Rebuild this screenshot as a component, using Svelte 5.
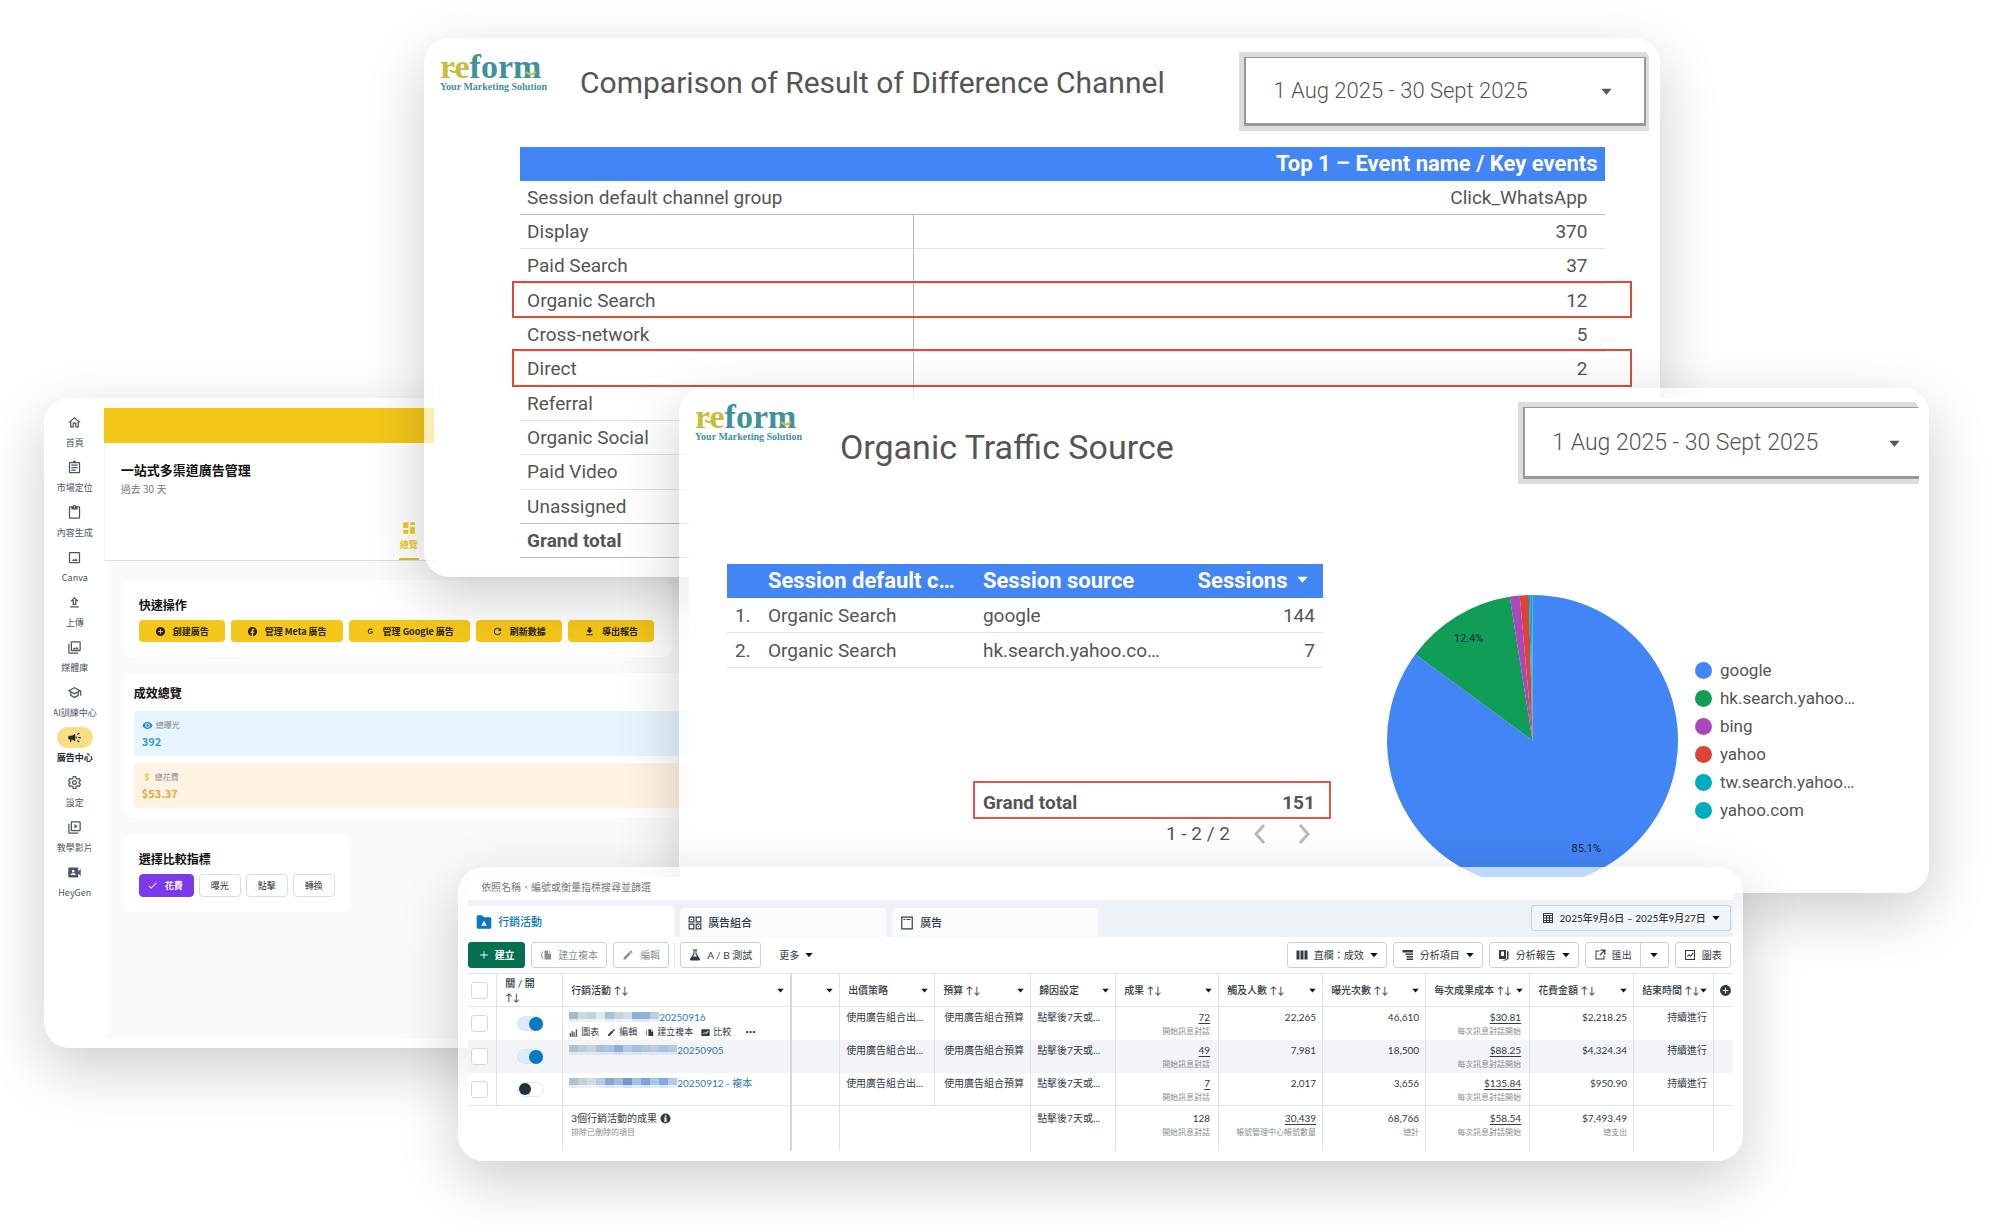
<script lang="ts">
  const icons: Record<string, string> = {
    home: 'M12 5.69l5 4.5V18h-2v-6H9v6H7v-7.81l5-4.5M12 3L2 12h3v8h6v-6h2v6h6v-8h3L12 3z',
    assignment: 'M7 15h7v2H7zm0-4h10v2H7zm0-4h10v2H7zm12-4h-4.18C14.4 1.84 13.3 1 12 1c-1.3 0-2.4.84-2.82 2H5c-1.1 0-2 .9-2 2v14c0 1.1.9 2 2 2h14c1.1 0 2-.9 2-2V5c0-1.1-.9-2-2-2zm0 16H5V5h14v14z',
    paste: 'M19 2h-4.18C14.4.84 13.3 0 12 0c-1.3 0-2.4.84-2.82 2H5c-1.1 0-2 .9-2 2v16c0 1.1.9 2 2 2h14c1.1 0 2-.9 2-2V4c0-1.1-.9-2-2-2zm-7 0c.55 0 1 .45 1 1s-.45 1-1 1-1-.45-1-1 .45-1 1-1zm7 18H5V4h2v3h10V4h2v16z',
    image: 'M19 5v14H5V5h14m0-2H5c-1.1 0-2 .9-2 2v14c0 1.1.9 2 2 2h14c1.1 0 2-.9 2-2V5c0-1.1-.9-2-2-2zM14.5 13l-2.2 2.8L10.6 14 8 17.5h9z',
    upload: 'M9 16h6v-6h4l-7-7-7 7h4v6zm3-10.17L14.17 8H13v6h-2V8H9.83L12 5.83zM5 18h14v2H5z',
    library: 'M20 4v12H8V4h12m0-2H8c-1.1 0-2 .9-2 2v12c0 1.1.9 2 2 2h12c1.1 0 2-.9 2-2V4c0-1.1-.9-2-2-2zm-8.5 9.67l1.69 2.26 2.48-3.1L19 15H9zM2 6v14c0 1.1.9 2 2 2h14v-2H4V6H2z',
    school: 'M12 3L1 9l4 2.18v6L12 21l7-3.82v-6l2-1.09V17h2V9L12 3zm6.82 6L12 12.72 5.18 9 12 5.28 18.82 9zM17 15.99l-5 2.73-5-2.73v-3.72L12 15l5-2.73v3.72z',
    campaign: 'M18 11v2h4v-2h-4zm-2 6.61c.96.71 2.21 1.65 3.2 2.39.4-.53.8-1.07 1.2-1.6-.99-.74-2.24-1.68-3.2-2.4-.4.54-.8 1.08-1.2 1.61zM20.4 5.6c-.4-.53-.8-1.07-1.2-1.6-.99.74-2.24 1.68-3.2 2.4.4.53.8 1.07 1.2 1.6.96-.72 2.21-1.65 3.2-2.4zM4 9c-1.1 0-2 .9-2 2v2c0 1.1.9 2 2 2h1v4h2v-4h1l5 3V6L8 9H4zm11.5 3c0-1.33-.58-2.53-1.5-3.35v6.69c.92-.81 1.5-2.01 1.5-3.34z',
    videos: 'M4 6H2v14c0 1.1.9 2 2 2h14v-2H4V6zm16-4H8c-1.1 0-2 .9-2 2v12c0 1.1.9 2 2 2h12c1.1 0 2-.9 2-2V4c0-1.1-.9-2-2-2zm0 14H8V4h12v12zM12 6.5v7l5-3.5z',
    heygen: 'M18 10.48V6c0-1.1-.9-2-2-2H4c-1.1 0-2 .9-2 2v12c0 1.1.9 2 2 2h12c1.1 0 2-.9 2-2v-4.48l4 3.98v-11l-4 3.98zM10 8c1.1 0 2 .9 2 2s-.9 2-2 2-2-.9-2-2 .9-2 2-2zm4 8H6v-.57c0-.81.48-1.53 1.22-1.85.85-.37 1.79-.58 2.78-.58s1.93.21 2.78.58c.74.32 1.22 1.04 1.22 1.85V16z',
    dashboard: 'M2 12h9V2H2v10zm0 10h9v-7H2v7zm12 0h8V10h-8v12zm0-20v5h8V2h-8z',
    add: 'M12 2C6.48 2 2 6.48 2 12s4.48 10 10 10 10-4.48 10-10S17.52 2 12 2zm5 11h-4v4h-2v-4H7v-2h4V7h2v4h4v2z',
    facebook: 'M22 12c0-5.52-4.48-10-10-10S2 6.48 2 12c0 4.84 3.44 8.87 8 9.8V15H8v-3h2V9.5C10 7.57 11.57 6 13.5 6H16v3h-2c-.55 0-1 .45-1 1v2h3v3h-3v6.95c5.05-.5 9-4.76 9-9.95z',
    google: 'M17 8A6 6 0 1 0 18 12h-6v2h3.5a4 4 0 1 1-.2-4.5z',
    refresh: 'M17.65 6.35C16.2 4.9 14.21 4 12 4c-4.42 0-7.99 3.58-7.99 8s3.57 8 7.99 8c3.73 0 6.84-2.55 7.73-6h-2.08c-.82 2.33-3.04 4-5.65 4-3.31 0-6-2.69-6-6s2.69-6 6-6c1.66 0 3.14.69 4.22 1.78L13 11h7V4l-2.35 2.35z',
    download: 'M19 9h-4V3H9v6H5l7 7 7-7zM5 18v2h14v-2H5z',
    eye: 'M12 4.5C7 4.5 2.73 7.61 1 12c1.73 4.39 6 7.5 11 7.5s9.27-3.11 11-7.5c-1.73-4.39-6-7.5-11-7.5zM12 17c-2.76 0-5-2.24-5-5s2.24-5 5-5 5 2.24 5 5-2.24 5-5 5zm0-8c-1.66 0-3 1.34-3 3s1.34 3 3 3 3-1.34 3-3-1.34-3-3-3z',
    check: 'M9 16.2L4.8 12l-1.4 1.4L9 19 21 7l-1.4-1.4z',
    caret: 'M1 6h22L12 19z',
    folder: 'M3 2h6l3 3h9a2 2 0 0 1 2 2v13a2 2 0 0 1-2 2H3a2 2 0 0 1-2-2V4a2 2 0 0 1 2-2zM12 10l-4 8h2.5l1.5-1 1.500 1H16z',
    grid: 'M1 1h10v10H1zM3 3v6h6V3zM13 1h10v10H13zM15 3v6h6V3zM1 13h10v10H1zM3 15v6h6v-6zM13 13h10v10H13zM15 15v6h6v-6zM5 5h2v2H5zM17 17h2v2h-2z',
    window: 'M2 1h20v22H2zM4 3v18h16V3zM6 5h3v2H6zM11 5h7v2h-7z',
    plus: 'M11 3h2v8h8v2h-8v8h-2v-8H3v-2h8z',
    copy: 'M9 3h7v6h6v12H9zM18 3l4 4h-4zM6 4v2C3.500 9 3.500 15 6 19v2C1 17 1 8 6 4z',
    pencil: 'M3 17.25V21h3.75L17.81 9.94l-3.75-3.75L3 17.25zM20.71 7.04c.39-.39.39-1.02 0-1.41l-2.34-2.34c-.39-.39-1.02-.39-1.41 0l-1.83 1.83 3.75 3.75 1.83-1.83z',
    flask: 'M8 1h8v2h-1v6l7 11a2 2 0 0 1-2 3H4a2 2 0 0 1-2-3L9 9V3H8zM11 3v7l-3 5h8l-3-5V3z',
    calendar: 'M2 2h20v20H2zM4 8v3h4V8zM10 8v3h4V8zM16 8v3h4V8zM4 13v3h4v-3zM10 13v3h4v-3zM16 13v3h4v-3zM4 18v2h4v-2zM10 18v2h4v-2zM16 18v2h4v-2zM4 4v2h16V4z',
    columns: 'M1 3h6v18H1zM9 3h6v18H9zM17 3h6v18h-6z',
    breakdown: 'M1 2h21v5H1zM7 9h15v3H7zM9 14h13v3H9zM9 19h13v3H9z',
    report: 'M2 2h14v18H2zM6 5v9h6V5zM18 4l3 1v15l-6 3H8l10-3z',
    exportBox: 'M3 3h8v2H5v14h14v-6h2v8H3zM13 1h10v10h-2.500V5.200l-8 8-1.800-1.800 8-8H13z',
    chart: 'M2 2h20v20H2zM4 4v16h16V4zM6 14l4-4 3 3 5-6 1.500 1.500L13 16l-3-3-3 3z',
    bars: 'M2 13h3v8H2zM7 8h3v13H7zM12 11h3v10h-3zM18 3h3v18h-3zM1 22h22v1H1z',
    compare: 'M1 3h22v18H1zM5 15l5-4 3 2 5-6 2 2-6 7-4-3-3 3z',
    info: 'M12 1a11 11 0 1 0 0 22 11 11 0 0 0 0-22zM10.500 5h3.500v3h-3.500zM9 10h5v7h1v2H9v-2h1v-5H9z'
  };

  const navItems = [
    { icon: 'home', label: '首頁' },
    { icon: 'assignment', label: '市場定位' },
    { icon: 'paste', label: '內容生成' },
    { icon: 'image', label: 'Canva' },
    { icon: 'upload', label: '上傳' },
    { icon: 'library', label: '媒體庫' },
    { icon: 'school', label: 'AI訓練中心' },
    { icon: 'campaign', label: '廣告中心' },
    { icon: 'settings', label: '設定' },
    { icon: 'videos', label: '教學影片' },
    { icon: 'heygen', label: 'HeyGen' }
  ];

  const quickActions = [
    { icon: 'add', label: '創建廣告' },
    { icon: 'facebook', label: '管理 Meta 廣告' },
    { icon: 'google', label: '管理 Google 廣告' },
    { icon: 'refresh', label: '刷新數據' },
    { icon: 'download', label: '導出報告' }
  ];

  const metrics = ['花費', '曝光', '點擊', '轉換'];
  let metric = $state('花費');

  const channels = [
    { name: 'Display', value: 370 },
    { name: 'Paid Search', value: 37 },
    { name: 'Organic Search', value: 12, marked: true },
    { name: 'Cross-network', value: 5 },
    { name: 'Direct', value: 2, marked: true },
    { name: 'Referral', value: '' },
    { name: 'Organic Social', value: '' },
    { name: 'Paid Video', value: '' },
    { name: 'Unassigned', value: '' }
  ];

  const sources = [
    { label: 'google', share: 85.1, color: '#4285f4' },
    { label: 'hk.search.yahoo…', share: 12.4, color: '#0f9d58' },
    { label: 'bing', share: 1.1, color: '#ab47bc' },
    { label: 'yahoo', share: 1, color: '#db4437' },
    { label: 'tw.search.yahoo…', share: 0.2, color: '#00acc1' },
    { label: 'yahoo.com', share: 0.2, color: '#00acc1' }
  ];

  function slicePath(start: number, share: number) {
    const a = (start / 100) * 2 * Math.PI;
    const b = ((start + share) / 100) * 2 * Math.PI;
    const point = (t: number) => `${146 + 146 * Math.sin(t)} ${146 - 146 * Math.cos(t)}`;
    return `M146 146L${point(a)}A146 146 0 ${share > 50 ? 1 : 0} 1 ${point(b)}Z`;
  }

  const slices = sources.map((s, i) => {
    const start = sources.slice(0, i).reduce((sum, p) => sum + p.share, 0);
    return { color: s.color, d: slicePath(start, s.share) };
  });

  const adColumns = [
    { label: '出價策略', sort: false },
    { label: '預算', sort: true },
    { label: '歸因設定', sort: false },
    { label: '成果', sort: true },
    { label: '觸及人數', sort: true },
    { label: '曝光次數', sort: true },
    { label: '每次成果成本', sort: true },
    { label: '花費金額', sort: true },
    { label: '結束時間', sort: true }
  ];

  let campaigns = $state([
    { name: '20250916', mask: ['#a9bac8', '#cbd9e4', '#c2d3df', '#dfe9f0', '#a5c3dc', '#c3d3e0', '#cfdfea', '#8eb0d8', '#94b2d8', '#b9cde4'], on: true, results: '72', reach: '22,265', views: '46,610', cost: '$30.81', spend: '$2,218.25' },
    { name: '20250905', mask: ['#b1bfd2', '#bccbdc', '#c4d2e2', '#a9c0dd', '#a9c3e0', '#8caed8', '#b5cbe4', '#a3c0e0', '#b0c6df', '#b8cbe3', '#a9c1e4', '#b2cbea'], on: true, results: '49', reach: '7,981', views: '18,500', cost: '$88.25', spend: '$4,324.34' },
    { name: '20250912 - 複本', mask: ['#b3bfcb', '#c3d0dc', '#cfdce6', '#b4cadf', '#86a9d2', '#a0bcdc', '#7397cc', '#a8c3e2', '#7fa3d6', '#a9c6e2', '#86aadb', '#b4c9e2'], on: false, results: '7', reach: '2,017', views: '3,656', cost: '$135.84', spend: '$950.90' }
  ]);
</script>

{#snippet icon(name: string)}
  <svg class="icon" viewBox="0 0 24 24" aria-hidden="true">
    {#if name === 'settings'}
      <path fill="none" stroke="currentColor" stroke-width="2" stroke-linejoin="round" d="M10 2.500h4l.6 3 2 1.200 2.900-1 2 3.500-2.300 2v1.600l2.300 2-2 3.500-2.900-1-2 1.200-.6 3h-4l-.6-3-2-1.200-2.900 1-2-3.500 2.300-2v-1.600l-2.300-2 2-3.500 2.900 1 2-1.200z" />
      <circle cx="12" cy="12" r="3" fill="none" stroke="currentColor" stroke-width="2" />
    {:else}
      <path fill-rule="evenodd" d={icons[name]} />
    {/if}
  </svg>
{/snippet}

{#snippet logo()}
  <svg class="logo" viewBox="0 0 108 46" role="img" aria-label="reform">
    <text x="0" y="30" class="logo-name"><tspan class="logo-re">re</tspan><tspan>form</tspan></text>
    <path d="M10 22q4 4 8 0" fill="none" stroke="#c9bd3f" stroke-width="2" />
    <path d="M86 24q5 5 10 0" fill="none" stroke="#c9bd3f" stroke-width="2" />
    <text x="0" y="42" class="logo-tag">Your Marketing Solution</text>
  </svg>
{/snippet}

{#snippet dateRange(id: string)}
  <div class="date-frame">
    <select {id} aria-label="Date range">
      <option>1 Aug 2025 - 30 Sept 2025</option>
    </select>
    {@render icon('caret')}
  </div>
{/snippet}

<main class="stage">
  <section class="window dashboard">
    <div class="shot dash">
      <nav class="side">
        {#each navItems as item}
          <a href="#{item.icon}" class="side-item" class:active={item.icon === 'campaign'}>
            <span class="side-icon">{@render icon(item.icon)}</span>
            <span class="side-label">{item.label}</span>
          </a>
        {/each}
      </nav>
      <div class="dash-main">
        <div class="dash-bar"></div>
        <header class="dash-head">
          <h2>一站式多渠道廣告管理</h2>
          <p>過去 30 天</p>
          <a href="#overview" class="dash-tab">{@render icon('dashboard')}總覽</a>
        </header>
        <div class="dash-body">
          <div class="panel">
            <h3>快速操作</h3>
            <div class="actions">
              {#each quickActions as action}
                <button>{@render icon(action.icon)}{action.label}</button>
              {/each}
            </div>
          </div>
          <div class="panel results">
            <h3>成效總覽</h3>
            <div class="stat views">
              <span class="stat-label">{@render icon('eye')}總曝光</span>
              <strong>392</strong>
            </div>
            <div class="stat spend">
              <span class="stat-label"><b>$</b>總花費</span>
              <strong>$53.37</strong>
            </div>
          </div>
          <div class="panel compare">
            <h3>選擇比較指標</h3>
            <div class="chips">
              {#each metrics as m}
                <button class:on={metric === m} onclick={() => (metric = m)}>
                  {#if metric === m}{@render icon('check')}{/if}{m}
                </button>
              {/each}
            </div>
          </div>
        </div>
      </div>
    </div>
  </section>

  <section class="window comparison">
    <div class="shot">
      <header class="report-head">
        {@render logo()}
        <h2>Comparison of Result of Difference Channel</h2>
        {@render dateRange('comparison-range')}
      </header>
      <table class="channels">
        <colgroup><col class="channel-col" /><col /></colgroup>
        <thead>
          <tr class="bar"><th colspan="2">Top 1 – Event name / Key events</th></tr>
          <tr class="sub"><th>Session default channel group</th><th>Click_WhatsApp</th></tr>
        </thead>
        <tbody>
          {#each channels as channel}
            <tr class:marked={channel.marked}><td>{channel.name}</td><td>{channel.value}</td></tr>
          {/each}
        </tbody>
        <tfoot>
          <tr><td>Grand total</td><td></td></tr>
        </tfoot>
      </table>
    </div>
  </section>

  <section class="window organic">
    <div class="shot">
      <header class="report-head">
        {@render logo()}
        <h2>Organic Traffic Source</h2>
        {@render dateRange('organic-range')}
      </header>
      <div class="report-body">
        <div class="source-side">
          <table class="sources">
            <thead>
              <tr><th></th><th>Session default c…</th><th>Session source</th><th>Sessions {@render icon('caret')}</th></tr>
            </thead>
            <tbody>
              <tr><td>1.</td><td>Organic Search</td><td>google</td><td>144</td></tr>
              <tr><td>2.</td><td>Organic Search</td><td>hk.search.yahoo.co…</td><td>7</td></tr>
            </tbody>
          </table>
          <div class="total"><span>Grand total</span><span>151</span></div>
          <div class="pager">
            <span>1 - 2 / 2</span>
            <button aria-label="Previous page"><svg viewBox="0 0 12 20"><path d="M10 1L2 10l8 9" /></svg></button>
            <button aria-label="Next page"><svg viewBox="0 0 12 20"><path d="M2 1l8 9-8 9" /></svg></button>
          </div>
        </div>
        <svg class="pie" viewBox="0 0 292 292" role="img" aria-label="Sessions by source">
          {#each slices as slice}
            <path d={slice.d} fill={slice.color} />
          {/each}
          <text x="82" y="47">12.4%</text>
          <text x="200" y="258">85.1%</text>
        </svg>
        <ul class="legend">
          {#each sources as s}
            <li><svg viewBox="0 0 18 18"><circle cx="9" cy="9" r="9" fill={s.color} /></svg>{s.label}</li>
          {/each}
        </ul>
      </div>
    </div>
  </section>

  <section class="window ads">
    <div class="shot">
      <input class="search" aria-label="搜尋" placeholder="依照名稱、編號或衡量指標搜尋並篩選" />
      <div class="tabs">
        <button class="tab current">{@render icon('folder')}行銷活動</button>
        <button class="tab">{@render icon('grid')}廣告組合</button>
        <button class="tab">{@render icon('window')}廣告</button>
        <button class="tool range">{@render icon('calendar')}2025年9月6日 – 2025年9月27日<span class="drop">{@render icon('caret')}</span></button>
      </div>
      <div class="toolbar">
        <button class="tool create">{@render icon('plus')}建立</button>
        <button class="tool faded">{@render icon('copy')}建立複本</button>
        <button class="tool faded">{@render icon('pencil')}編輯</button>
        <span class="divider"></span>
        <button class="tool">{@render icon('flask')}A / B 測試</button>
        <button class="tool plain">更多<span class="drop">{@render icon('caret')}</span></button>
        <span class="spacer"></span>
        <button class="tool">{@render icon('columns')}直欄：成效<span class="drop">{@render icon('caret')}</span></button>
        <button class="tool">{@render icon('breakdown')}分析項目<span class="drop">{@render icon('caret')}</span></button>
        <button class="tool">{@render icon('report')}分析報告<span class="drop">{@render icon('caret')}</span></button>
        <div class="split">
          <button class="tool">{@render icon('exportBox')}匯出</button>
          <button class="tool" aria-label="匯出選項"><span class="drop">{@render icon('caret')}</span></button>
        </div>
        <button class="tool">{@render icon('chart')}圖表</button>
      </div>
      <table class="campaigns">
        <thead>
          <tr>
            <th><input type="checkbox" aria-label="全選" /></th>
            <th>關 / 開<br />↑↓</th>
            <th><div class="head">行銷活動 ↑↓{@render icon('caret')}</div></th>
            <th><div class="head">{@render icon('caret')}</div></th>
            {#each adColumns as col}
              <th><div class="head">{col.label}{col.sort ? ' ↑↓' : ''}{@render icon('caret')}</div></th>
            {/each}
            <th class="add-col">{@render icon('add')}</th>
          </tr>
        </thead>
        <tbody>
          {#each campaigns as c, i}
            <tr>
              <td><input type="checkbox" aria-label={c.name} /></td>
              <td><button class="switch" class:on={c.on} role="switch" aria-checked={c.on} aria-label={c.name} onclick={() => (c.on = !c.on)}></button></td>
              <td>
                <a class="name" href="#{c.name}">
                  <svg class="mask" viewBox="0 0 {c.mask.length * 9} 10" width={c.mask.length * 9} height="10">
                    {#each c.mask as color, n}
                      <rect x={n * 9} y="0" width="9" height="7" fill={color} />
                      <rect x={n * 9} y="7" width="9" height="3" fill={color} opacity="0.3" />
                    {/each}
                  </svg>{c.name}
                </a>
                {#if i === 0}
                  <div class="row-tools">
                    <button>{@render icon('bars')}圖表</button>
                    <button>{@render icon('pencil')}編輯</button>
                    <button>{@render icon('copy')}建立複本</button>
                    <button>{@render icon('compare')}比較</button>
                    <button class="dots">•••</button>
                  </div>
                {/if}
              </td>
              <td></td>
              <td>使用廣告組合出...</td>
              <td>使用廣告組合預算</td>
              <td>點擊後7天或...</td>
              <td><u>{c.results}</u><small>開始訊息對話</small></td>
              <td>{c.reach}</td>
              <td>{c.views}</td>
              <td><u>{c.cost}</u><small>每次訊息對話開始</small></td>
              <td>{c.spend}</td>
              <td>持續進行</td>
              <td></td>
            </tr>
          {/each}
        </tbody>
        <tfoot>
          <tr>
            <td></td>
            <td></td>
            <td><span class="summary">3個行銷活動的成果 {@render icon('info')}</span><small>排除已刪除的項目</small></td>
            <td></td>
            <td></td>
            <td></td>
            <td>點擊後7天或...</td>
            <td>128<small>開始訊息對話</small></td>
            <td><u>30,439</u><small>帳號管理中心帳號數量</small></td>
            <td>68,766<small>總計</small></td>
            <td><u>$58.54</u><small>每次訊息對話開始</small></td>
            <td>$7,493.49<small>總支出</small></td>
            <td></td>
            <td></td>
          </tr>
        </tfoot>
      </table>
    </div>
  </section>
</main>

<style>
  :global(body) {
    background: #fff;
  }

  .stage {
    position: relative;
    min-height: 100vh;
    overflow: hidden;
    font-family: Roboto, "Noto Sans CJK TC", sans-serif;
    color: #555;
  }

  .stage * {
    box-sizing: border-box;
  }

  h2, h3, p, ul {
    margin: 0;
    padding: 0;
    font-weight: 400;
  }

  button, input, select {
    font: inherit;
    color: inherit;
    margin: 0;
  }

  button {
    background: none;
    border: 0;
    padding: 0;
    white-space: nowrap;
    cursor: pointer;
  }

  a {
    color: inherit;
    text-decoration: none;
  }

  table {
    border-collapse: separate;
    border-spacing: 0;
    table-layout: fixed;
  }

  th, td {
    padding: 0;
    font-weight: 400;
    text-align: left;
    white-space: nowrap;
  }

  .icon {
    width: 11px;
    height: 11px;
    fill: currentColor;
    flex: none;
  }

  /* Floating windows: a translucent mat around each opaque page */
  .window {
    position: absolute;
    padding: 10px;
    border-radius: 26px;
    background: rgba(255, 255, 255, 0.67);
    box-shadow: 0 20px 60px rgba(0, 0, 0, 0.2);
  }

  .shot {
    background: #fff;
    border-radius: 14px;
    overflow: hidden;
  }

  .dashboard {
    top: 398px;
    left: 2.2%;
    width: 46%;
  }

  .comparison {
    top: 38px;
    left: 21.3%;
    width: 62.1%;
  }

  .organic {
    top: 388px;
    left: 34.1%;
    width: 62.8%;
  }

  .ads {
    top: 867px;
    left: 23.01%;
    width: 64.52%;
  }

  /* Dashboard */
  .dash {
    display: flex;
    min-height: 630px;
    font-family: "Noto Sans CJK TC", sans-serif;
  }

  .side {
    width: 50px;
    flex: none;
    padding-right: 8px;
    color: #4b5563;
  }

  .side-item {
    display: flex;
    flex-direction: column;
    align-items: center;
    height: 45px;
    padding-top: 4px;
    gap: 4px;
  }

  .side-icon {
    display: flex;
    align-items: center;
    justify-content: center;
    width: 36px;
    height: 21px;
    border-radius: 11px;
  }

  .side-icon .icon {
    width: 15px;
    height: 15px;
  }

  .side-label {
    font-size: 9px;
    line-height: 12px;
    white-space: nowrap;
  }

  .side-item.active {
    color: #1f2937;
    font-weight: 700;
  }

  .active .side-icon {
    background: #fade85;
  }

  .dash-main {
    flex: 1;
    display: flex;
    flex-direction: column;
    min-width: 0;
  }

  .dash-bar {
    height: 35px;
    background: #f5c71a;
  }

  .dash-head {
    height: 118px;
    padding: 17px 16px 0;
    border-bottom: 1px solid #ddd;
    border-left: 1px solid #f3f3f3;
  }

  .dash-head h2 {
    font-size: 13px;
    line-height: 20px;
    font-weight: 700;
    color: #111;
  }

  .dash-head p {
    font-size: 10px;
    line-height: 18px;
    color: #777;
  }

  .dash-tab {
    display: flex;
    flex-direction: column;
    align-items: center;
    width: 20px;
    margin: 23px 0 0 278px;
    border-bottom: 2px solid #e5bf20;
    font-size: 9px;
    line-height: 14px;
    height: 39px;
    gap: 3px;
    font-weight: 700;
    color: #f0c929;
    white-space: nowrap;
  }

  .dash-tab .icon {
    width: 14px;
    height: 14px;
  }

  .dash-body {
    flex: 1;
    display: flex;
    flex-direction: column;
    align-items: flex-start;
    gap: 16px;
    padding: 19px 20px;
    margin-left: 4px;
    background: #f8fafc;
  }

  .panel {
    padding: 15px;
    margin-left: -4px;
    background: #fff;
    border-radius: 8px;
    min-width: 548px;
  }

  .panel h3 {
    font-size: 12px;
    line-height: 20px;
    margin-bottom: 5px;
    font-weight: 700;
    color: #111;
  }

  .actions, .chips {
    display: flex;
    gap: 6px;
  }

  .actions button {
    display: flex;
    align-items: center;
    justify-content: center;
    gap: 7px;
    height: 22px;
    padding: 0 16px;
    border-radius: 4px;
    background: #f5c71a;
    font-size: 9px;
    font-weight: 700;
    color: #2b2412;
  }

  .panel.results {
    align-self: stretch;
    padding: 10px;
  }

  .results h3 {
    margin-bottom: 8px;
  }

  .stat {
    height: 45px;
    padding: 6px 8px;
    border-radius: 4px;
  }

  .stat + .stat {
    margin-top: 7px;
  }

  .stat-label {
    display: flex;
    align-items: center;
    gap: 3px;
    font-size: 8px;
    line-height: 16px;
    color: #888;
  }

  .stat-label b {
    width: 10px;
    text-align: center;
    color: #e9ab2c;
  }

  .stat-label .icon {
    color: #2490d0;
  }

  .stat strong {
    display: block;
    font-size: 11px;
    line-height: 16px;
  }

  .views {
    background: #e6f4fe;
    color: #3a9bd4;
  }

  .stat.spend {
    background: #fff3e4;
    color: #e0a93b;
  }

  .panel.compare {
    min-width: 0;
  }

  .chips {
    gap: 5px;
  }

  .chips button {
    height: 23px;
    padding: 0 11px;
    border: 1px solid #ddd;
    border-radius: 4px;
    font-size: 9px;
    color: #333;
  }

  .chips .on {
    display: flex;
    align-items: center;
    gap: 7px;
    padding: 0 10px 0 7px;
    border-color: #7c3aed;
    background: #7c3aed;
    color: #fff;
    font-weight: 700;
  }

  /* Analytics reports */
  .report-head {
    display: flex;
    align-items: flex-start;
    padding-left: 6px;
  }

  .logo {
    width: 108px;
    height: 46px;
    flex: none;
    fill: #3f929b;
    font-family: "Liberation Serif", serif;
    font-weight: 700;
  }

  .logo-name {
    font-size: 34px;
  }

  .logo-re {
    fill: #c9bd3f;
  }

  .logo-tag {
    font-size: 10px;
  }

  .report-head h2 {
    flex: 1;
    padding-left: 32px;
    font-size: 30px;
    line-height: 36px;
    white-space: nowrap;
  }

  .date-frame {
    position: relative;
    width: 410px;
    height: 79px;
    margin: 4px 1px 0 0;
    border: 5px solid #ddd;
    border-right-width: 3px;
  }

  .date-frame select {
    appearance: none;
    display: block;
    width: 100%;
    height: 100%;
    padding: 0 27px;
    border: 1px solid #999;
    border-width: 1px 2px 3px 2px;
    border-radius: 0;
    background: #fff;
    font-size: 22px;
    font-weight: 300;
  }

  .date-frame .icon {
    position: absolute;
    right: 34px;
    top: 29px;
  }

  .comparison .report-head {
    height: 99px;
  }

  .comparison .report-head h2 {
    padding-top: 17px;
  }

  .organic .report-head {
    height: 166px;
  }

  .organic .report-head h2 {
    padding: 29px 0 0 37px;
    font-size: 34px;
    line-height: 40px;
  }

  .organic .date-frame {
    width: 401px;
    height: 82px;
    margin-right: 0;
    border-right: 0;
  }

  .organic .date-frame select {
    border-right: 0;
    font-size: 23px;
  }

  .organic .date-frame .icon {
    right: 19px;
    top: 31px;
  }

  .channels {
    width: calc(100% - 131px);
    height: 411px;
    margin: 0 45px 9px 86px;
    font-size: 19px;
  }

  .channels tr {
    height: 34px;
  }

  .channels th, .channels td {
    border-bottom: 1px solid #e2e2e2;
    padding: 0 18px 0 7px;
  }

  .channel-col {
    width: 394px;
  }

  .channels td:first-child {
    border-right: 1px solid #bbb;
  }

  .channels tr > :last-child {
    text-align: right;
  }

  .channels .bar th {
    padding-right: 8px;
    border-bottom: 0;
    background: #4285f4;
    color: #fff;
    font-size: 22px;
    line-height: 24px;
    font-weight: 700;
  }

  .channels .sub th {
    border-color: #bbb;
  }

  .channels tbody tr:last-child td, .channels tfoot td {
    border-bottom-color: #bbb;
  }

  .channels tfoot td {
    font-weight: 700;
  }

  .marked {
    position: relative;
  }

  .marked td:first-child::after {
    content: "";
    position: absolute;
    inset: -3px -27px 0 -8px;
    border: 2px solid #e04b38;
  }

  .report-body {
    display: flex;
    height: 319px;
    padding-left: 38px;
  }

  .source-side {
    flex: 1;
    max-width: 604px;
  }

  .sources {
    width: calc(100% - 8px);
    font-size: 19px;
  }

  .sources tr {
    height: 34px;
  }

  .sources td {
    height: 35px;
    border-bottom: 1px solid #e2e2e2;
  }

  .sources th {
    background: #4285f4;
    color: #fff;
    font-size: 22px;
    line-height: 24px;
    font-weight: 700;
  }

  .sources tr > :nth-child(1) {
    width: 41px;
    padding-left: 8px;
  }

  .sources tr > :nth-child(2) {
    width: 215px;
  }

  .sources tr > :nth-child(4) {
    width: 140px;
    padding-right: 8px;
    text-align: right;
  }

  .sources th:nth-child(4) {
    padding-right: 15px;
  }

  .sources th .icon {
    margin: 0 0 3px 4px;
  }

  .total {
    display: flex;
    align-items: center;
    justify-content: space-between;
    height: 38px;
    margin: 113px 0 0 246px;
    padding: 4px 14px 0 8px;
    border: 2px solid #e05548;
    font-size: 19px;
    font-weight: 700;
  }

  .pager {
    display: flex;
    align-items: center;
    justify-content: flex-end;
    gap: 32px;
    padding: 3px 21px 0 0;
    font-size: 19px;
    line-height: 24px;
  }

  .pager span {
    margin-right: -8px;
  }

  .pager button {
    display: flex;
  }

  .pager svg {
    width: 12px;
    height: 20px;
    fill: none;
    stroke: #bbb;
    stroke-width: 3px;
  }

  .pie {
    width: 291px;
    height: 291px;
    flex: none;
    margin: 31px 0 0 56px;
    font-size: 11px;
    text-anchor: middle;
    fill: #223;
  }

  .legend {
    display: flex;
    flex-direction: column;
    justify-content: center;
    height: 292px;
    margin: 30px 0 0 17px;
    list-style: none;
    font-size: 17px;
    line-height: 27px;
    gap: 1px;
    white-space: nowrap;
  }

  .legend li {
    display: flex;
    align-items: center;
    gap: 8px;
  }

  .legend svg {
    width: 17px;
    height: 17px;
  }

  /* Ads manager */
  .ads .shot {
    font-family: Lato, "Noto Sans CJK TC", sans-serif;
    font-size: 10px;
    line-height: 14px;
    color: #333b44;
  }

  .search {
    display: block;
    width: 100%;
    height: 23px;
    padding: 0 13px 4px;
    border: 0;
    background: #fff;
  }

  .search::placeholder {
    color: #777;
    opacity: 1;
  }

  .tabs {
    display: flex;
    align-items: flex-end;
    gap: 6px;
    height: 37px;
    padding-right: 2px;
    background: #eef1f5;
  }

  .tab {
    display: flex;
    align-items: center;
    gap: 6px;
    width: 206px;
    height: 29px;
    padding: 0 8px;
    border-radius: 4px 4px 0 0;
    background: #f9fbfd;
    font-size: 11px;
    font-weight: 500;
  }

  .tab .icon {
    width: 14px;
    height: 14px;
  }

  .tab.current {
    height: 31px;
    background: #fff;
    color: #0a78be;
  }

  .tab.current .icon {
    width: 16px;
    height: 16px;
  }

  .tool {
    display: flex;
    align-items: center;
    justify-content: center;
    gap: 6px;
    height: 26px;
    padding: 0 8px;
    border: 1px solid #ccd0d5;
    border-radius: 3px;
    background: #fff;
  }

  .tool .icon {
    width: 12px;
    height: 12px;
  }

  .drop {
    display: flex;
  }

  .tool .drop .icon {
    width: 8px;
    height: 8px;
    color: #111;
  }

  .tool.range {
    width: 200px;
    margin: 0 0 6px auto;
    background: #f1f4f8;
    font-weight: 500;
  }

  .toolbar {
    display: flex;
    align-items: center;
    gap: 6px;
    height: 36px;
    padding: 0 2px 0 0;
  }

  .tool.create {
    width: 57px;
    border-color: #04704d;
    background: #04704d;
    color: #fff;
    font-weight: 700;
  }

  .create .icon {
    width: 10px;
    height: 10px;
  }

  .faded {
    color: #8a9097;
  }

  .divider {
    width: 1px;
    height: 26px;
    margin: 0 -1px;
    background: #e2e4e8;
  }

  .tool.plain {
    margin-left: 4px;
    border: 0;
  }

  .spacer {
    flex: 1;
  }

  .split {
    display: flex;
  }

  .split .tool:first-child {
    border-radius: 3px 0 0 3px;
  }

  .split .tool:last-child {
    width: 28px;
    border-left: 0;
    border-radius: 0 3px 3px 0;
  }

  .campaigns {
    width: 100%;
    border-top: 1px solid #e1e4e8;
  }

  .campaigns tr {
    height: 33px;
  }

  .campaigns th {
    padding: 0 8px;
    border-right: 1px solid #dfe2e6;
    border-bottom: 1px solid #dfe2e6;
    font-weight: 500;
  }

  .campaigns td {
    padding: 3px 6px 0;
    border-right: 1px solid #dfe2e6;
    vertical-align: top;
    overflow: hidden;
  }

  .campaigns tr > :last-child {
    border-right: 0;
  }

  .campaigns tbody tr:nth-child(2) {
    background: #f2f4f7;
  }

  .campaigns tbody tr:last-child td {
    border-bottom: 1px solid #dfe2e6;
  }

  .campaigns tfoot tr {
    height: 45px;
  }

  .campaigns tfoot td {
    padding-top: 5px;
  }

  .campaigns tfoot td:nth-child(1),
  .campaigns tfoot td:nth-child(5) {
    border-right: 0;
  }

  .campaigns tfoot td:nth-child(3) {
    padding-left: 8px;
  }

  .campaigns th:nth-child(1) { width: 29px; }
  .campaigns th:nth-child(2) { width: 66px; line-height: 14px; }
  .campaigns th:nth-child(3) { width: 229px; }
  .campaigns th:nth-child(4) { width: 48px; }
  .campaigns th:nth-child(5) { width: 95px; }
  .campaigns th:nth-child(6) { width: 96px; }
  .campaigns th:nth-child(7) { width: 85px; }
  .campaigns th:nth-child(8) { width: 103px; }
  .campaigns th:nth-child(9) { width: 104px; }
  .campaigns th:nth-child(10) { width: 103px; }
  .campaigns th:nth-child(11) { width: 104px; }
  .campaigns th:nth-child(12) { width: 104px; }
  .campaigns th:nth-child(13) { width: 80px; }
  .campaigns th:nth-child(14) { width: 20px; }

  .campaigns tr > :nth-child(3) {
    border-right: 2px solid #d5d8dc;
  }

  .campaigns td:nth-child(n + 8) {
    text-align: right;
  }

  .campaigns td:nth-child(6) {
    text-align: right;
  }

  .campaigns td:nth-child(8), .campaigns td:nth-child(11) {
    padding-right: 8px;
  }

  .campaigns tr > :first-child {
    padding: 0 0 0 3px;
    vertical-align: middle;
  }

  .campaigns tbody td:nth-child(2) {
    padding: 0 0 0 20px;
    vertical-align: middle;
  }

  .head {
    display: flex;
    align-items: center;
    justify-content: space-between;
  }

  .head .icon {
    width: 7px;
    height: 7px;
    margin: 0 -2px 0 auto;
    color: #111;
  }

  .campaigns .add-col {
    padding: 0 0 0 5px;
  }

  .add-col .icon {
    display: block;
    width: 13px;
    height: 13px;
  }

  input[type="checkbox"] {
    appearance: none;
    display: block;
    width: 17px;
    height: 17px;
    border: 1px solid #d5d9de;
    border-radius: 3px;
    background: #fff;
  }

  .switch {
    display: flex;
    align-items: center;
    width: 27px;
    height: 15px;
    padding: 0 1px;
    border: 1px solid #e2e5e9;
    border-radius: 8px;
    background: #fff;
  }

  .switch::before {
    content: "";
    width: 12px;
    height: 12px;
    border-radius: 50%;
    background: #25303b;
  }

  .switch.on {
    justify-content: flex-end;
    padding: 0;
    border-color: #d6e6f5;
    background: #dcebf8;
  }

  .switch.on::before {
    width: 14px;
    height: 14px;
    background: #0a78c2;
  }

  .name {
    display: flex;
    align-items: center;
    color: #2b78bd;
  }

  .row-tools {
    display: flex;
    gap: 8px;
    padding-top: 1px;
    font-size: 9px;
  }

  .row-tools button {
    display: flex;
    align-items: center;
    gap: 3px;
  }

  .row-tools .icon {
    width: 9px;
    height: 9px;
  }

  .row-tools .dots {
    margin-left: 6px;
    font-size: 6px;
  }

  small {
    display: block;
    font-size: 8px;
    line-height: 15px;
    color: #888e95;
  }

  u {
    text-underline-offset: 2px;
  }

  .summary {
    display: flex;
    align-items: center;
    gap: 3px;
  }
</style>
